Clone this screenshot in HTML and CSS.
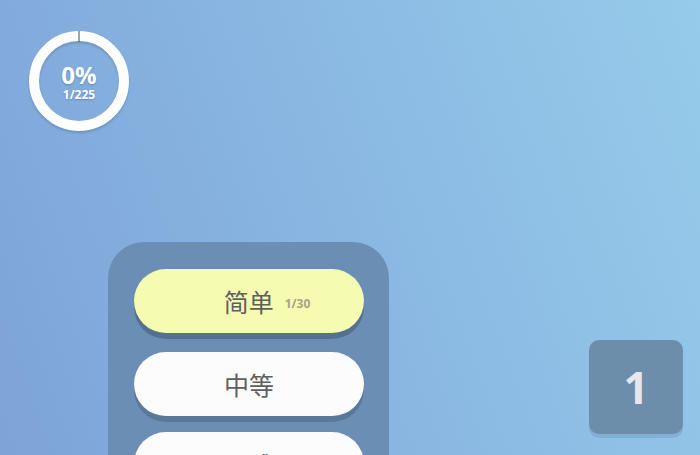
FILE: index.html
```html
<!DOCTYPE html>
<html lang="zh">
<head>
<meta charset="utf-8">
<link rel="stylesheet" href="styles.css">
</head>
<body>
<div class="screen">
  <header class="top">
    <div class="ring">
      <svg class="ring-svg" width="100" height="100" viewBox="0 0 100 100">
        <circle cx="50" cy="50" r="45" fill="none" stroke="#fdfdfe" stroke-width="10"/>
        <line x1="50" y1="0" x2="50" y2="11" stroke="#4a4a4a" stroke-width="1"/>
      </svg>
      <div class="ring-text">
        <div class="pct">0%</div>
        <div class="count">1/225</div>
      </div>
    </div>
  </header>
  <main class="main">
    <section class="panel">
      <button class="level active"><span class="name">简单</span><span class="sub">1/30</span></button>
      <button class="level second"><span class="name">中等</span></button>
      <button class="level third"><span class="name">困难</span></button>
    </section>
    <div class="tile">1</div>
  </main>
</div>
</body>
</html>
```
FILE: styles.css
```css
html, body {
  margin: 0;
  padding: 0;
  height: 100%;
  overflow: hidden;
}
body {
  background: linear-gradient(70deg, #7ea3d7 0%, #88b5e1 45%, #96cbea 100%);
  font-family: "Open Sans", "Noto Sans CJK SC", sans-serif;
}
.screen {
  width: 700px;
  height: 455px;
  display: flex;
  flex-direction: column;
  overflow: hidden;
}
.top {
  padding: 31px 0 0 29px;
  height: 100px;
}
.ring {
  position: relative;
  width: 100px;
  height: 100px;
}
.ring-svg {
  display: block;
  filter: drop-shadow(0 2px 1px rgba(40, 70, 110, 0.25));
}
.ring-text {
  position: absolute;
  inset: 0;
  display: flex;
  flex-direction: column;
  align-items: center;
  justify-content: center;
  color: #fff;
  font-weight: 700;
  text-shadow: 0 1px 2px rgba(40, 70, 110, 0.35);
}
.pct {
  font-size: 24px;
  line-height: 20px;
  margin-top: 2px;
}
.count {
  font-size: 12px;
  line-height: 11px;
  margin-top: 4px;
}
.main {
  display: flex;
  margin-top: 111px;
}
.panel {
  margin-left: 108px;
  width: 230px;
  padding: 27px 25px 0 26px;
  height: 200px;
  background: #6b8fb4;
  border-radius: 36px 36px 0 0;
  display: flex;
  flex-direction: column;
  gap: 19px;
}
.level {
  flex: none;
  width: 230px;
  height: 64px;
  border: none;
  border-radius: 32px;
  background: #fcfcfd;
  box-shadow: 0 6px 0 #5a7898;
  display: flex;
  align-items: center;
  justify-content: center;
  padding: 0;
  font-family: "Noto Sans CJK SC", "Open Sans", sans-serif;
  color: #5f5f5f;
  cursor: pointer;
}
.level.third {
  margin-top: -3px;
}
.level.active {
  background: #f5fbb0;
  box-shadow: 0 6px 0 #56718f;
  padding-left: 36px;
}
.name {
  font-size: 25px;
  line-height: 30px;
}
.sub {
  font-family: "Open Sans", sans-serif;
  font-size: 12px;
  font-weight: 700;
  color: #a6a67f;
  margin-left: 11px;
  margin-top: 5px;
}
.tile {
  margin-left: auto;
  margin-right: 17px;
  margin-top: 98px;
  width: 94px;
  height: 94px;
  border-radius: 10px;
  background: #6c8eaa;
  box-shadow: 0 4px 0 rgba(120, 160, 200, 0.55);
  display: flex;
  align-items: center;
  justify-content: center;
  color: #e6e7ef;
  font-size: 44px;
  font-weight: 700;
  line-height: 1;
}
```
